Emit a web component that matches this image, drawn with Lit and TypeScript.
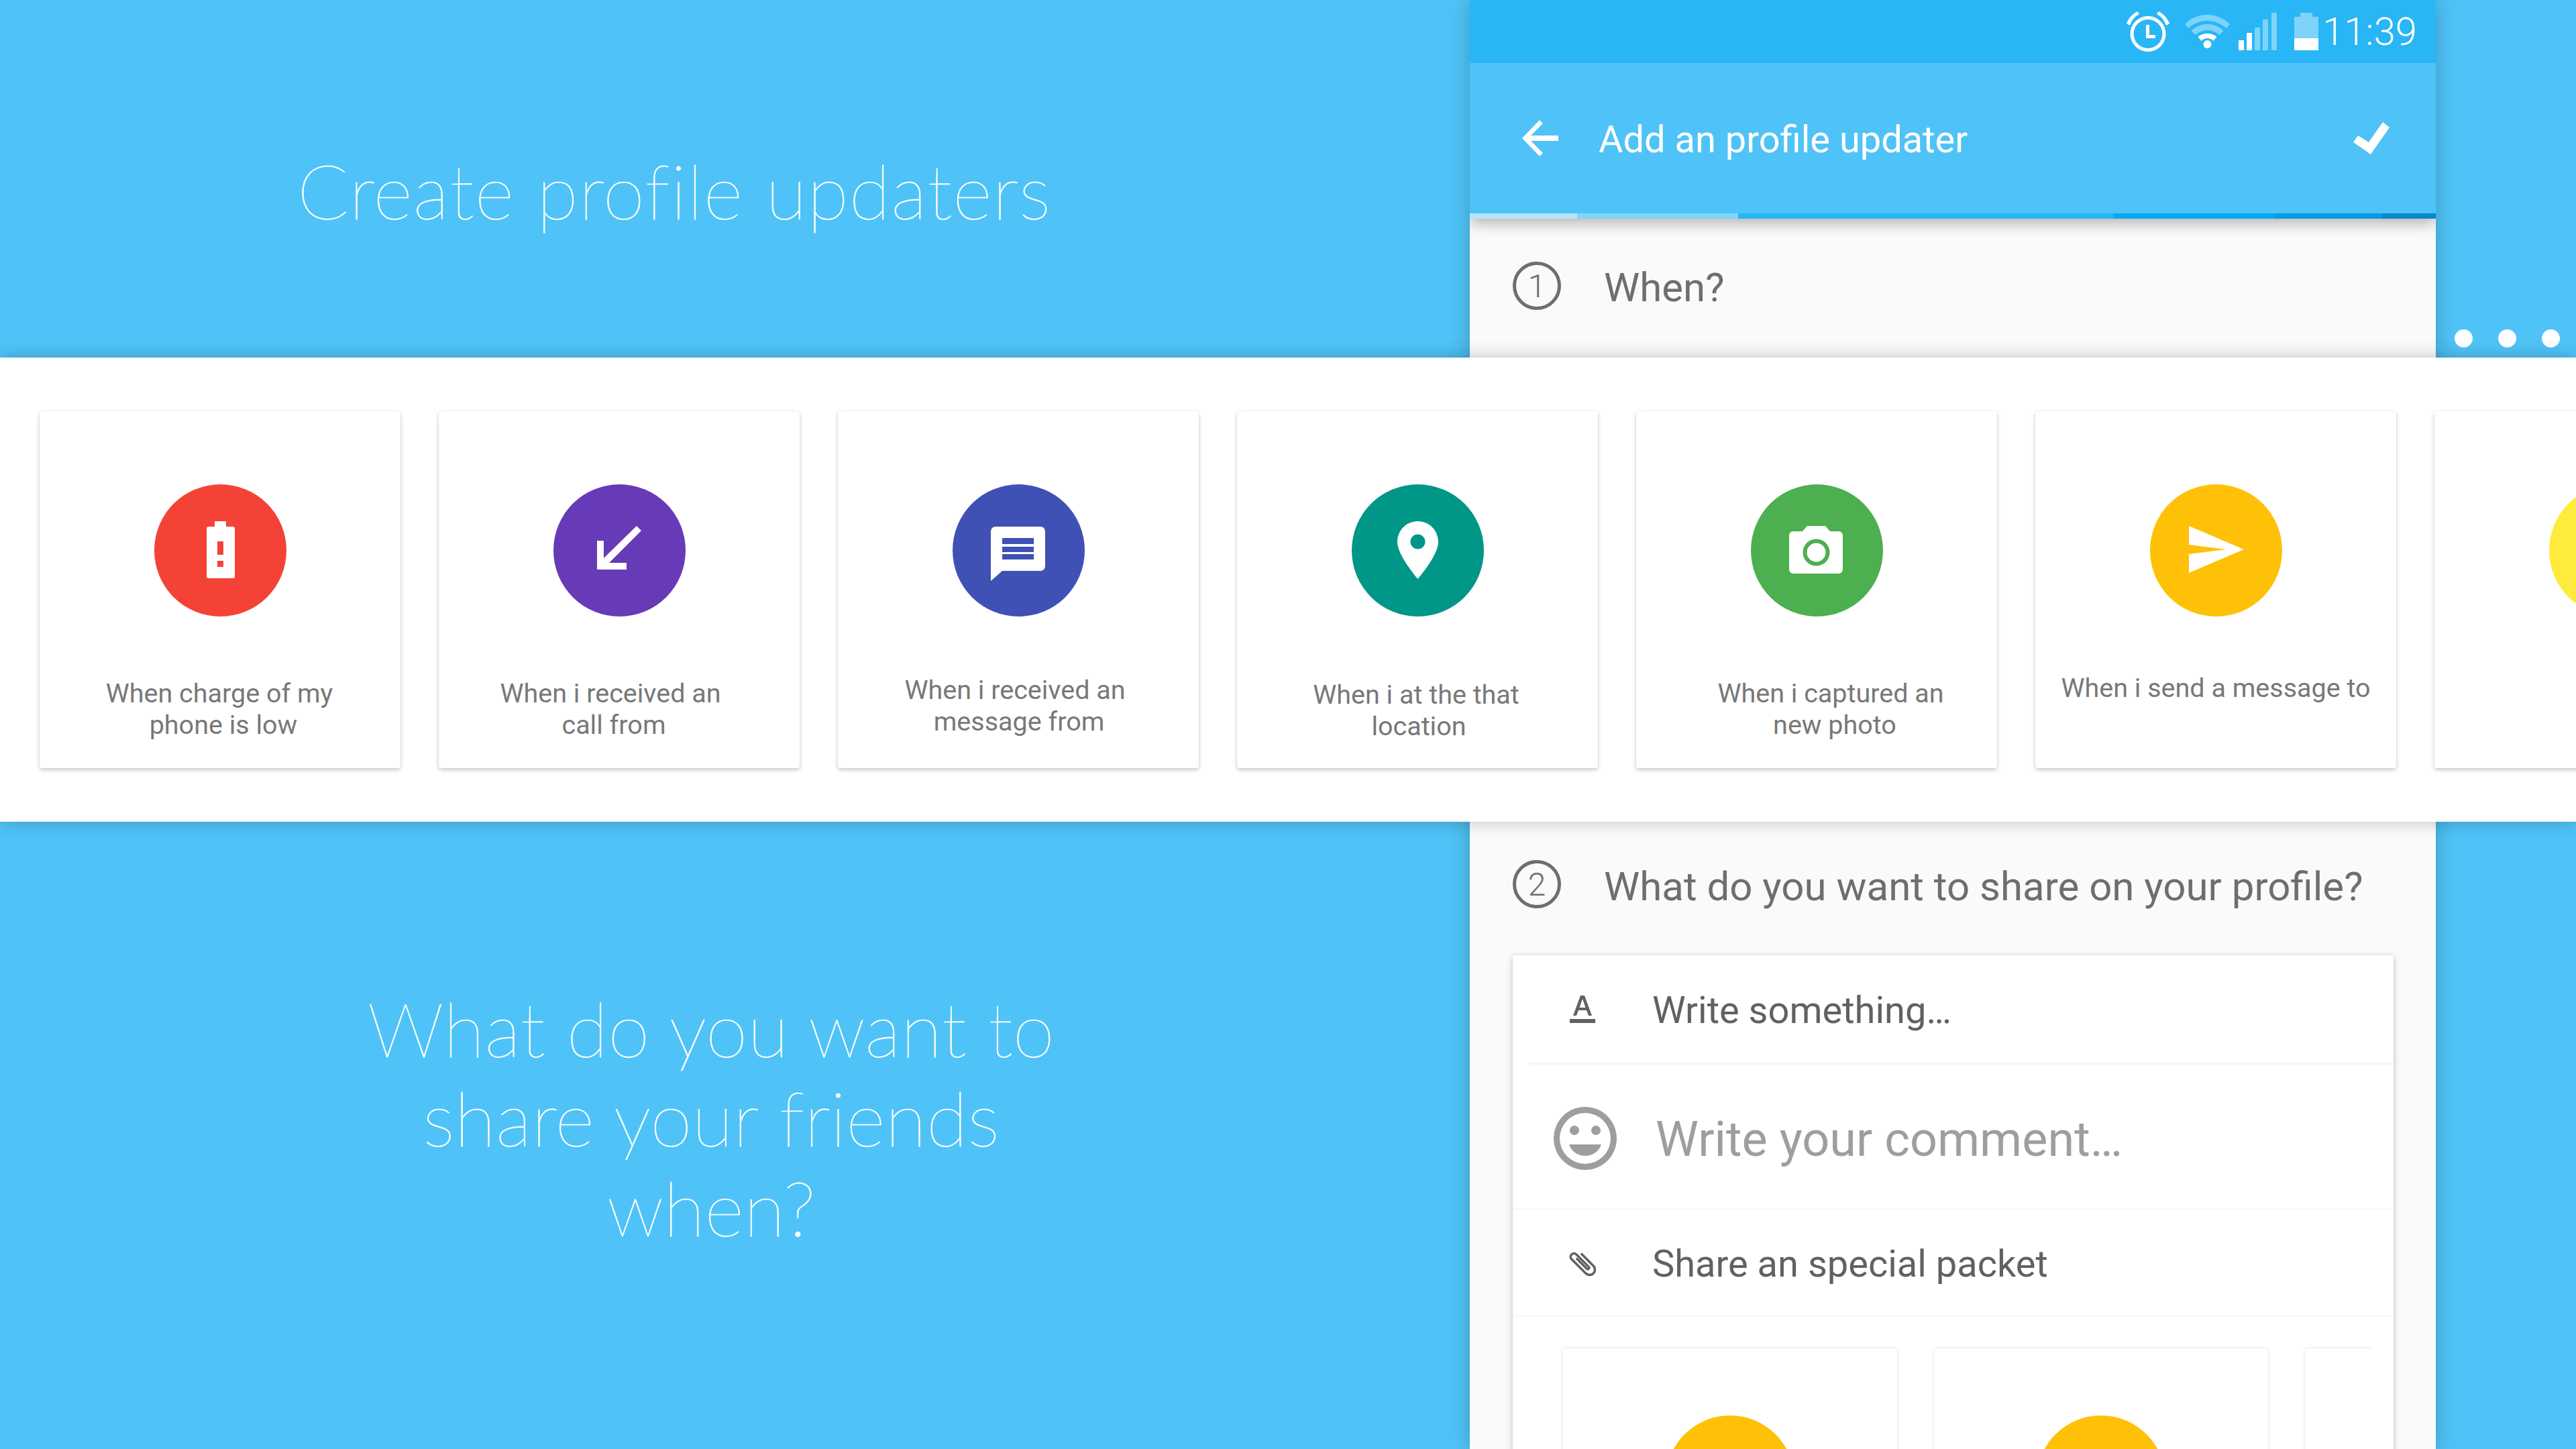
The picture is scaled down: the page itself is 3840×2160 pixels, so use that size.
import { LitElement, css, html, svg } from 'lit';
import { customElement } from 'lit/decorators.js';

interface Line { text: string; dx: number; }
interface Trigger { color: string; top: number; icon: unknown; lines: Line[]; }

const TRIGGERS: Trigger[] = [
  {
    color: '#F44336', top: 91,
    icon: svg`<path fill-rule="evenodd" d="M90 55h17v8h10a3 3 0 013 3v71a3 3 0 01-3 3H81a3 3 0 01-3-3V66a3 3 0 013-3h9zM94 85v20h9V85zM94 114v9h9v-9z"/>`,
    lines: [{ text: 'When charge of my', dx: -1 }, { text: 'phone is low', dx: 5 }],
  },
  {
    color: '#673AB7', top: 91,
    icon: svg`<path d="M124 62l7 7-48 48h26v10H65V84h10v26z"/>`,
    lines: [{ text: 'When i received an', dx: -13 }, { text: 'call from', dx: -8 }],
  },
  {
    color: '#3F51B5', top: 86,
    icon: svg`<path fill-rule="evenodd" d="M57 70a7 7 0 017-7h67a7 7 0 017 7v52a7 7 0 01-7 7H74l-17 15zM74 80v9h47v-9zM74 93v8h47v-8zM74 104v8h47v-8z"/>`,
    lines: [{ text: 'When i received an', dx: -5 }, { text: 'message from', dx: 1 }],
  },
  {
    color: '#009688', top: 93,
    icon: svg`<path fill-rule="evenodd" d="M98.500 55C81 55 68 69 68 86c0 20 30.500 55 30.500 55S129 106 129 86c0-17-13-31-30.500-31zm0 41.500a11 11 0 110-22 11 11 0 010 22z"/>`,
    lines: [{ text: 'When i at the that', dx: -2 }, { text: 'location', dx: 2 }],
  },
  {
    color: '#4CAF50', top: 91,
    icon: svg`<path fill-rule="evenodd" d="M57 76a6 6 0 016-6h14l7-8h27l7 8h13a6 6 0 016 6v51a6 6 0 01-6 6H63a6 6 0 01-6-6zM97.500 121.500a20 20 0 100-40 20 20 0 000 40zm0-6a14 14 0 110-28 14 14 0 010 28z"/>`,
    lines: [{ text: 'When i captured an', dx: 21 }, { text: 'new photo', dx: 27 }],
  },
  {
    color: '#FFC107', top: 83,
    icon: svg`<path d="M58 62l82 35-82 35v-28l55-7-55-7z"/>`,
    lines: [{ text: 'When i send a message to', dx: 0 }],
  },
  { color: '#FFEB3B', top: 91, icon: svg``, lines: [] },
];

@customElement('trigger-card')
class TriggerCard extends LitElement {
  static properties = { item: { attribute: false } };
  item!: Trigger;

  static get styles() {
    return css`
      :host { display: block; flex: none; width: 538px; height: 532px; }
      .card {
        height: 100%;
        box-sizing: border-box;
        padding-top: 109px;
        background: #fff;
        border-radius: 4px;
        box-shadow: 0 3px 6px rgba(0, 0, 0, 0.2), 0 0 3px rgba(0, 0, 0, 0.08);
        font: 400 39.500px/47px Roboto, sans-serif;
        color: #787878;
        text-align: center;
      }
      .circle { display: block; width: 197px; height: 197px; margin: 0 auto; fill: #fff; }
      .line { display: block; white-space: nowrap; }
    `;
  }

  render() {
    const { color, icon, lines, top } = this.item;
    return html`
      <div class="card">
        <svg class="circle" viewBox="0 0 197 197" style="background:${color};border-radius:50%">${icon}</svg>
        <div style="margin-top:${top}px">
          ${lines.map((l) => html`<span class="line" style="transform:translateX(${l.dx}px)">${l.text}</span>`)}
        </div>
      </div>
    `;
  }
}

@customElement('app-root')
export class AppRoot extends LitElement {
  static get styles() {
    return css`
      :host { display: block; width: 3840px; height: 2160px; }
      .page {
        position: relative;
        display: flex;
        width: 3840px;
        height: 2160px;
        overflow: hidden;
        background: #4FC3F7;
        font-family: Roboto, sans-serif;
      }
      .left { flex: none; width: 2191px; color: #fff; font-family: Lato, sans-serif; }
      .hero {
        margin: 0;
        font-weight: 100;
        font-size: 113px;
        line-height: 133.500px;
        font-variant-ligatures: none;
        -webkit-text-stroke: 0.8px #fff;
      }
      .hero-one { padding: 217px 0 0 443px; letter-spacing: 1px; white-space: nowrap; }
      .hero-two { width: 2120px; padding-top: 1115px; text-align: center; }

      .phone {
        flex: none;
        width: 1440px;
        height: 2160px;
        background: #FAFAFA;
        box-shadow: 0 0 30px rgba(0, 0, 0, 0.22);
        overflow: hidden;
      }
      .status {
        display: flex;
        align-items: center;
        justify-content: flex-end;
        height: 94px;
        padding-right: 28px;
        box-sizing: border-box;
        background: #29B6F6;
        color: #fff;
        font-size: 58px;
        font-weight: 300;
      }
      .status svg { display: block; flex: none; fill: #fff; }
      .toolbar {
        display: flex;
        align-items: center;
        height: 224px;
        padding-left: 78px;
        box-sizing: border-box;
        background: #4FC3F7;
        color: #fff;
        font-size: 56px;
      }
      .toolbar .title { margin-left: 60px; padding-top: 3px; flex: 1; }
      .toolbar svg { display: block; flex: none; fill: #fff; }
      .progress { display: flex; height: 8px; }
      .progress div { height: 100%; }
      .head-shadow { box-shadow: 0 6px 22px rgba(0, 0, 0, 0.3); position: relative; }

      .step {
        display: flex;
        align-items: center;
        gap: 64px;
        padding-left: 64px;
        color: #6E6E6E;
        font-size: 60px;
      }
      .step .copy { padding-top: 4px; }
      .step-two .copy { padding-top: 6px; }
      .badge {
        flex: none;
        box-sizing: border-box;
        width: 72px;
        height: 72px;
        border: 5px solid #6E6E6E;
        border-radius: 50%;
        display: flex;
        align-items: center;
        justify-content: center;
        font-size: 48px;
        font-weight: 300;
      }
      .step-one { height: 200px; }
      .step-two { height: 186px; margin-top: 699px; }
      .sheet {
        margin: 13px 63px 0 64px;
        background: #fff;
        border-radius: 4px;
        box-shadow: 0 2px 10px rgba(0, 0, 0, 0.25);
        height: 800px;
        overflow: hidden;
      }
      .row {
        display: flex;
        align-items: center;
        box-sizing: border-box;
        color: #616161;
        font-size: 56px;
        border-bottom: 1px solid #F1F1F1;
      }
      .row .copy { padding-top: 4px; }
      .row svg { display: block; flex: none; }
      .row-write { height: 160px; padding-left: 85px; gap: 85px; border-bottom: none; }
      .rule { height: 3px; margin-left: 24px; background: #F5F5F5; }
      .row-comment { height: 216px; padding: 4px 0 0 61px; gap: 58px; font-size: 72px; color: #9E9E9E; }
      .row-share { height: 159px; padding-left: 84px; gap: 84px; }
      .minis { display: flex; gap: 55px; margin: 44px 33px 0 70px; padding: 4px 0 0 5px; overflow: hidden; }
      .mini {
        flex: none;
        box-sizing: border-box;
        width: 498px;
        height: 400px;
        padding-top: 100px;
        border-radius: 4px;
        background: #fff;
        box-shadow: 0 0 4px rgba(0, 0, 0, 0.14);
      }
      .mini div { width: 192px; height: 192px; margin: 0 auto; border-radius: 50%; background: #FFC107; }
      .mini.blank div { background: none; }

      .dots {
        display: flex;
        gap: 38px;
        padding: 491px 0 0 28px;
      }
      .dots span { flex: none; width: 27px; height: 27px; border-radius: 50%; background: #fff; }

      .band {
        position: absolute;
        left: 0;
        top: 533px;
        width: 3840px;
        height: 692px;
        box-sizing: border-box;
        display: flex;
        gap: 57px;
        padding: 80px 0 0 59px;
        overflow: hidden;
        background: #fff;
      }
      .band-shadow {
        position: absolute;
        left: 0;
        top: 533px;
        width: 3840px;
        height: 692px;
        box-shadow: 0 0 24px rgba(0, 0, 0, 0.24);
      }
    `;
  }

  private progress = [
    [160, '#B3E5FC'], [240, '#81D4FA'], [560, '#29B6F6'],
    [240, '#03A9F4'], [160, '#039BE5'], [80, '#0288D1'],
  ];

  render() {
    return html`
      <div class="page">
        <div class="left">
          <h1 class="hero hero-one">Create profile updaters</h1>
          <h1 class="hero hero-two">What do you want to<br />share your friends<br />when?</h1>
        </div>

        <div class="phone">
          <div class="head-shadow">
            <div class="status">
              <svg width="64" height="60" viewBox="0 0 64 60" style="margin-right:23px">
                <path d="M0 18C3 10 9 4 16 0l3 4c-6 3-11 8-14 17zM64 18C61 10 55 4 48 0l-3 4c6 3 11 8 14 17z"/>
                <path fill-rule="evenodd" d="M32 7a26.500 26.500 0 100 53 26.500 26.500 0 000-53zm0 5a21.500 21.500 0 110 43 21.500 21.500 0 010-43z"/>
                <path d="M29 20h5v15h9v5H29z"/>
              </svg>
              <svg width="67" height="50" viewBox="0 0 67 50" style="margin-right:13px">
                <path opacity=".4" d="M33.500 0C21 0 9 5 0 14l5 6c8-7 18-11 28.500-11S54 13 62 20l5-6C58 5 46 0 33.500 0z"/>
                <path opacity=".4" d="M33.500 14c-8 0-17 3-24 10l6 6c5-4 11-7 18-7s13 3 18 7l6-6c-7-7-16-10-24-10z"/>
                <path d="M33.500 28c-6 0-11 2-14 5l5 6c3-3 6-4 9-4s6 1 9 4l5-6c-3-3-8-5-14-5z"/>
                <circle cx="33.500" cy="44" r="6"/>
              </svg>
              <svg width="57" height="56" viewBox="0 0 57 56" style="margin-right:26px">
                <rect x="0" y="41" width="8" height="15"/>
                <rect x="12" y="30" width="8" height="26"/>
                <rect opacity=".4" x="24" y="22" width="8" height="34"/>
                <rect opacity=".4" x="36" y="10" width="8" height="46"/>
                <rect opacity=".4" x="49" y="0" width="8" height="56"/>
              </svg>
              <svg width="36" height="56" viewBox="0 0 36 56" style="margin-right:6px">
                <path opacity=".4" d="M9 0h18v6h9v38H0V6h9z"/>
                <rect y="38" width="36" height="18"/>
              </svg>
              <span>11:39</span>
            </div>
            <div class="toolbar">
              <svg width="54" height="54" viewBox="0 0 54 54">
                <path d="M54 23H13L31 5l-5-5L0 27l26 27 5-5-18-18h41z"/>
              </svg>
              <span class="title">Add an profile updater</span>
              <svg width="54" height="48" viewBox="0 0 54 48" style="margin-right:69px">
                <path d="M7 20l16 10L44 0l10 8-28 40L0 30z"/>
              </svg>
            </div>
            <div class="progress">
              ${this.progress.map(([w, c]) => html`<div style="width:${w}px;background:${c}"></div>`)}
            </div>
          </div>

          <div class="step step-one">
            <span class="badge">1</span>
            <span class="copy">When?</span>
          </div>
          <div class="step step-two">
            <span class="badge">2</span>
            <span class="copy">What do you want to share on your profile?</span>
          </div>

          <div class="sheet">
            <div class="row row-write">
              <svg width="38" height="41" viewBox="0 0 38 41" fill="#616161">
                <path fill-rule="evenodd" d="M16 0h6l11 30h-5l-3-8H13l-3 8H5zm3 5l-4.500 13h9z"/>
                <rect x="0" y="35" width="38" height="6"/>
              </svg>
              <span class="copy">Write something…</span>
            </div>
            <div class="rule"></div>
            <div class="row row-comment">
              <svg width="94" height="94" viewBox="0 0 94 94" fill="#9E9E9E">
                <path fill-rule="evenodd" d="M47 0a47 47 0 100 94 47 47 0 000-94zm0 9a38 38 0 110 76 38 38 0 010-76z"/>
                <circle cx="31" cy="35" r="7"/>
                <circle cx="63" cy="35" r="7"/>
                <path d="M23 56h48c-3 10-13 17-24 17s-21-7-24-17z"/>
              </svg>
              <span class="copy">Write your comment…</span>
            </div>
            <div class="row row-share">
              <svg width="40" height="42" viewBox="0 0 40 42" fill="none" stroke="#616161" stroke-width="3.500">
                <path transform="rotate(-45 20 21)" d="M28 10v26a8 8 0 01-16 0V6a5 5 0 0110 0v26a2 2 0 01-4 0V10"/>
              </svg>
              <span class="copy">Share an special packet</span>
            </div>
            <div class="minis">
              <div class="mini"><div></div></div>
              <div class="mini"><div></div></div>
              <div class="mini blank"><div></div></div>
            </div>
          </div>
        </div>

        <div class="dots"><span></span><span></span><span></span></div>

        <div class="band-shadow"></div>
        <div class="band">
          ${TRIGGERS.map((t) => html`<trigger-card .item=${t}></trigger-card>`)}
        </div>
      </div>
    `;
  }
}
